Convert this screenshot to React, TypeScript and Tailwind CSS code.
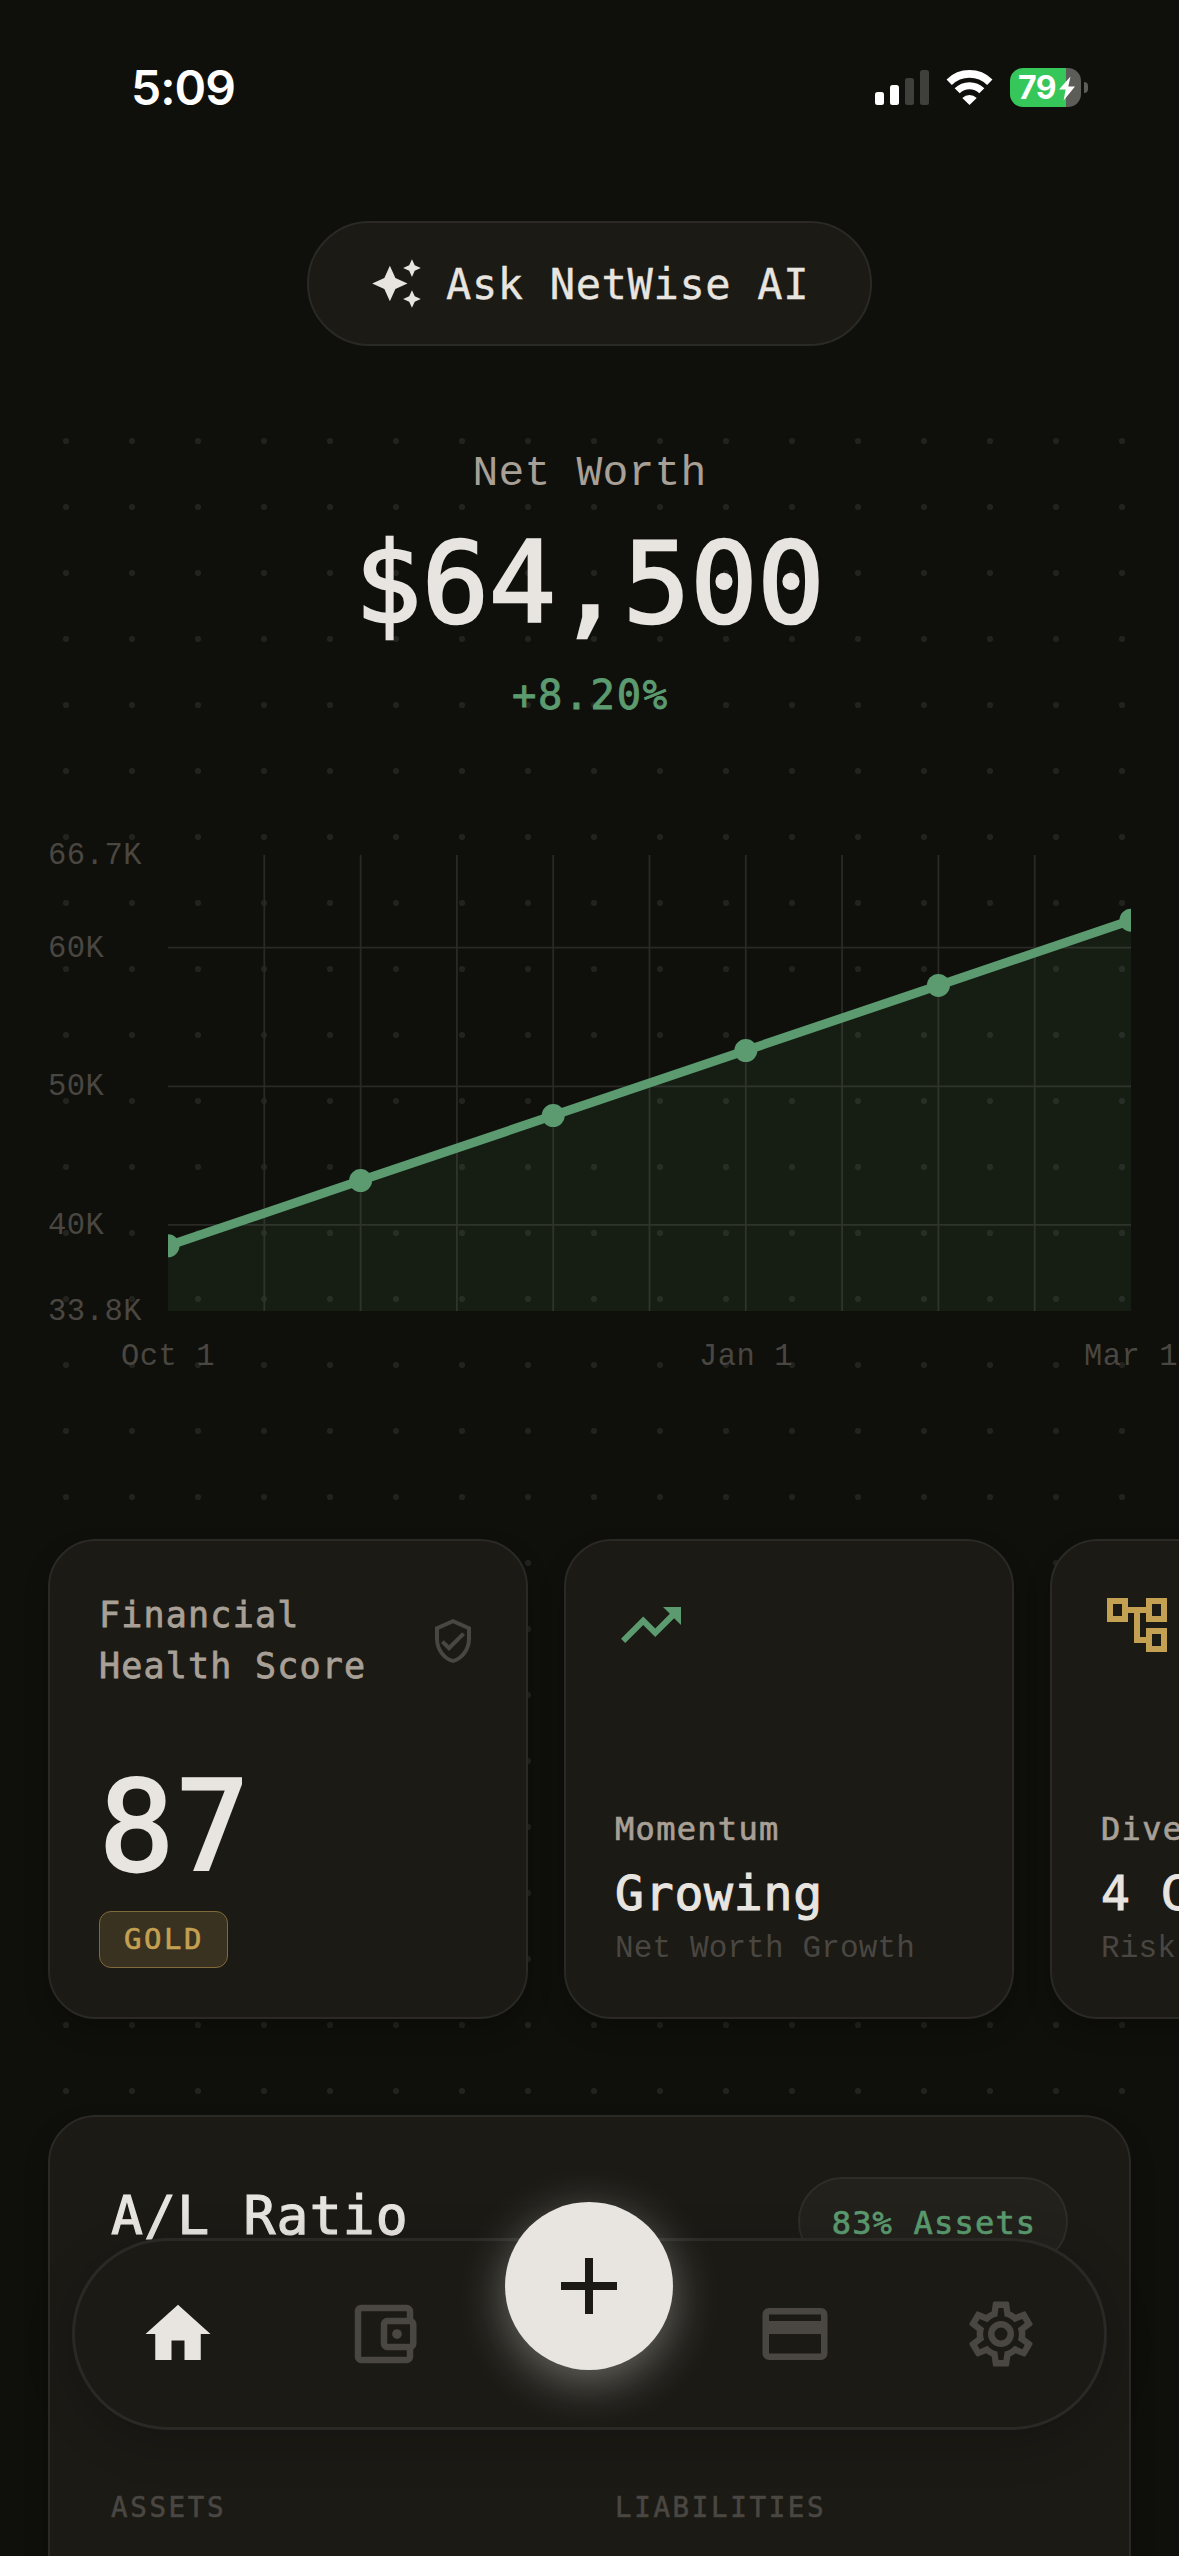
import type { ReactNode } from "react";

const MEDIUM =
  "font-['DejaVu_Sans_Mono','Liberation_Mono',monospace] [-webkit-text-stroke:0.022em_currentColor]";
const LIGHT = "font-['Liberation_Mono','DejaVu_Sans_Mono',monospace]";

const ICONS = {
  sparkle:
    "M19 9l1.25-2.75L23 5l-2.75-1.25L19 1l-1.25 2.75L15 5l2.75 1.25L19 9zm-7.5.5L9 4 6.5 9.5 1 12l5.5 2.5L9 20l2.5-5.5L17 12l-5.5-2.5zM19 15l-1.25 2.75L15 19l2.75 1.25L19 23l1.25-2.75L23 19l-2.75-1.25L19 15z",
  shield:
    "M21,11C21,16.55 17.16,21.74 12,23C6.84,21.74 3,16.55 3,11V5L12,1L21,5V11M12,21C15.75,20 19,15.54 19,11.22V6.3L12,3.18L5,6.3V11.22C5,15.54 8.25,20 12,21M16.59,7.58L10,14.17L7.41,11.59L6,13L10,17L18,9L16.59,7.58Z",
  trending:
    "M16,6L18.29,8.29L13.41,13.17L9.41,9.17L2,16.59L3.41,18L9.41,12L13.41,16L19.71,9.71L22,12V6H16Z",
  tree: "M22 11V3h-7v3H9V3H2v8h7V8h2v10h4v3h7v-8h-7v3h-2V8h2v3h7zM7 9H4V5h3v4zm10 6h3v4h-3v-4zm0-10h3v4h-3V5z",
  home: "M10,20V14H14V20H19V12H22L12,3L2,12H5V20H10Z",
  wallet:
    "M5,3C3.89,3 3,3.9 3,5V19A2,2 0 0,0 5,21H19A2,2 0 0,0 21,19V16.72C21.59,16.37 22,15.74 22,15V9C22,8.26 21.59,7.63 21,7.28V5A2,2 0 0,0 19,3H5M5,5H19V7H13A2,2 0 0,0 11,9V15A2,2 0 0,0 13,17H19V19H5V5M13,9H20V15H13V9M16,10.5A1.5,1.5 0 0,0 14.5,12A1.5,1.5 0 0,0 16,13.5A1.5,1.5 0 0,0 17.5,12A1.5,1.5 0 0,0 16,10.5Z",
  card: "M20,4H4C2.89,4 2,4.89 2,6V18A2,2 0 0,0 4,20H20A2,2 0 0,0 22,18V6C22,4.89 21.1,4 20,4M20,18H4V12H20V18M20,8H4V6H20V8Z",
  cog: "M12,8A4,4 0 0,1 16,12A4,4 0 0,1 12,16A4,4 0 0,1 8,12A4,4 0 0,1 12,8M12,10A2,2 0 0,0 10,12A2,2 0 0,0 12,14A2,2 0 0,0 14,12A2,2 0 0,0 12,10M10,22C9.75,22 9.54,21.82 9.5,21.58L9.13,18.93C8.5,18.68 7.96,18.34 7.44,17.94L4.95,18.95C4.73,19.03 4.46,18.95 4.34,18.73L2.34,15.27C2.21,15.05 2.27,14.78 2.46,14.63L4.57,12.97L4.5,12L4.57,11L2.46,9.37C2.27,9.22 2.21,8.95 2.34,8.73L4.34,5.27C4.46,5.05 4.73,4.96 4.95,5.05L7.44,6.05C7.96,5.66 8.5,5.32 9.13,5.07L9.5,2.42C9.54,2.18 9.75,2 10,2H14C14.25,2 14.46,2.18 14.5,2.42L14.87,5.07C15.5,5.32 16.04,5.66 16.56,6.05L19.05,5.05C19.27,4.96 19.54,5.05 19.66,5.27L21.66,8.73C21.79,8.95 21.73,9.22 21.54,9.37L19.43,11L19.5,12L19.43,13L21.54,14.63C21.73,14.78 21.79,15.05 21.66,15.27L19.66,18.73C19.54,18.95 19.27,19.04 19.05,18.95L16.56,17.95C16.04,18.34 15.5,18.68 14.87,18.93L14.5,21.58C14.46,21.82 14.25,22 14,22H10M11.25,4L10.88,6.61C9.68,6.86 8.62,7.5 7.85,8.39L5.44,7.35L4.69,8.65L6.8,10.2C6.4,11.37 6.4,12.64 6.8,13.8L4.68,15.36L5.43,16.66L7.86,15.62C8.63,16.5 9.68,17.14 10.87,17.38L11.24,20H12.76L13.13,17.39C14.32,17.14 15.37,16.5 16.14,15.62L18.57,16.66L19.32,15.36L17.2,13.81C17.6,12.64 17.6,11.37 17.2,10.2L19.31,8.65L18.56,7.35L16.15,8.39C15.38,7.5 14.32,6.86 13.12,6.62L12.75,4H11.25Z",
  plus: "M19,13H13V19H11V13H5V11H11V5H13V11H19V13Z",
};

function Icon({ name, className }: { name: keyof typeof ICONS; className: string }) {
  return (
    <svg viewBox="0 0 24 24" fill="currentColor" className={`block shrink-0 ${className}`}>
      <path d={ICONS[name]} />
    </svg>
  );
}

function StatusBar() {
  return (
    <div className="flex h-[221px] items-start justify-between pr-[91px] pl-[131px] text-white">
      <span className="mt-[58px] font-['Inter',sans-serif] text-[48px] leading-[60px] font-semibold tracking-[-1px]">
        5:09
      </span>
      <div className="mt-[68px] flex h-[39px] items-center">
        <svg className="block" width="54" height="35" viewBox="0 0 54 35" fill="white">
          <rect x="0" y="22" width="9" height="13" rx="2.5" />
          <rect x="15" y="15" width="9" height="20" rx="2.5" />
          <rect x="30" y="8" width="9" height="27" rx="2.5" opacity="0.2" />
          <rect x="45" y="0" width="9" height="35" rx="2.5" opacity="0.2" />
        </svg>
        <svg className="ml-[17px] block" width="47" height="35" viewBox="0 0 47 35" fill="none">
          <path d="M3.2 12.2 A29 29 0 0 1 43.8 12.2" stroke="white" strokeWidth="7.6" />
          <path d="M11.2 20.8 A17.5 17.5 0 0 1 35.8 20.8" stroke="white" strokeWidth="7.2" />
          <path d="M16.3 28 A10.4 10.4 0 0 1 30.7 28 L23.5 35 Z" fill="white" />
        </svg>
        <div className="relative ml-[17px] flex h-[39px] w-[71px] items-center overflow-hidden rounded-[13px] bg-[linear-gradient(90deg,#35c759_56px,#5c5c59_56px)]">
          <span className="ml-[8px] font-['Inter',sans-serif] text-[32px] leading-[39px] font-bold tracking-[-0.5px]">
            79
          </span>
          <svg className="absolute top-[8px] left-[48px]" width="18" height="25" viewBox="0 0 18 25">
            <path d="M12.5 0.5 L1 13.5 H7.6 L5.6 24.5 L17 10.5 H10.3 Z" fill="white" />
          </svg>
        </div>
        <div className="ml-[3px] h-[11px] w-[4px] rounded-r-full bg-[#5c5c59]" />
      </div>
    </div>
  );
}

const PLOT = { left: 168, right: 1131, top: 15, bottom: 471 };
const POINTS = [405.8, 340.6, 275.6, 210.6, 145.4, 80.2].map((y, i) => ({ x: 168 + i * 192.6, y }));
const Y_LABELS = [
  { text: "66.7K", y: 24 },
  { text: "60K", y: 117 },
  { text: "50K", y: 255 },
  { text: "40K", y: 394 },
  { text: "33.8K", y: 480 },
];
const X_LABELS = [
  { text: "Oct 1", x: 121 },
  { text: "Jan 1", x: 699 },
  { text: "Mar 1", x: 1084 },
];

function Chart() {
  const line = POINTS.map((p) => `${p.x},${p.y}`).join(" ");
  return (
    <svg className="mt-[115px] block" width="1179" height="540" viewBox="0 0 1179 540">
      <defs>
        <clipPath id="plot">
          <rect x={PLOT.left} y={PLOT.top} width={963} height={456} />
        </clipPath>
      </defs>
      <g stroke="#2a2925" strokeWidth="1.8">
        {[1, 2, 3, 4, 5, 6, 7, 8, 9].map((i) => (
          <line key={i} x1={PLOT.left + i * 96.3} x2={PLOT.left + i * 96.3} y1={PLOT.top} y2={PLOT.bottom} />
        ))}
        {[107.7, 246.3, 384.8].map((y) => (
          <line key={y} x1={PLOT.left} x2={PLOT.right} y1={y} y2={y} />
        ))}
      </g>
      <g clipPath="url(#plot)">
        <polygon
          points={`${PLOT.left},${PLOT.bottom} ${line} ${PLOT.right},${PLOT.bottom}`}
          fill="#5b9b6f"
          fillOpacity="0.1"
        />
        <polyline points={line} fill="none" stroke="#5b9b6f" strokeWidth="9" />
        {POINTS.map((p) => (
          <circle key={p.x} cx={p.x} cy={p.y} r="11.5" fill="#5b9b6f" />
        ))}
      </g>
      <g className={`${LIGHT} text-[30.5px] tracking-[0.5px]`} fill="#4a4641">
        {Y_LABELS.map((l) => (
          <text key={l.text} x="48" y={l.y}>
            {l.text}
          </text>
        ))}
        {X_LABELS.map((l) => (
          <text key={l.text} x={l.x} y="525">
            {l.text}
          </text>
        ))}
      </g>
    </svg>
  );
}

const CARD =
  "shrink-0 rounded-[48px] border-2 border-[#2a2925] bg-[#1b1a15] shadow-[0_12px_24px_rgba(0,0,0,0.22)]";

function MetricCard({
  icon,
  label,
  value,
  note,
}: {
  icon: ReactNode;
  label: string;
  value: string;
  note: string;
}) {
  return (
    <div className={`flex h-[480px] w-[450px] flex-col px-[49px] py-[48px] whitespace-nowrap ${CARD}`}>
      {icon}
      <div className={`mt-auto text-[32px] leading-[40px] tracking-[1.3px] text-[#a8a096] ${MEDIUM}`}>{label}</div>
      <div className={`mt-[14px] text-[48px] leading-[60px] tracking-[0.8px] text-[#e8e5e0] ${MEDIUM}`}>{value}</div>
      <div className={`mt-[6px] text-[31px] leading-[40px] tracking-[0.15px] text-[#4a4641] ${LIGHT}`}>{note}</div>
    </div>
  );
}

function NavBar() {
  return (
    <nav className="absolute right-[72px] bottom-[126px] left-[72px] grid h-[192px] grid-cols-5 place-items-center rounded-full border-3 border-[#2a2925] bg-[#1b1a15] text-[#4a4641] shadow-[0_12px_48px_rgba(0,0,0,0.2)]">
      <Icon name="home" className="size-[78px] text-[#e8e5e0]" />
      <Icon name="wallet" className="size-[78px]" />
      <button className="flex size-[168px] -translate-y-12 items-center justify-center rounded-full bg-[#e8e5e0] text-[#1b1a15] shadow-[0_12px_48px_rgba(232,229,224,0.4)]">
        <Icon name="plus" className="size-[96px]" />
      </button>
      <Icon name="card" className="size-[78px]" />
      <Icon name="cog" className="size-[78px]" />
    </nav>
  );
}

export default function App() {
  return (
    <div className="relative h-[2556px] w-[1179px] overflow-hidden bg-[#0f100b]">
      <StatusBar />
      <button
        className={`mx-auto flex h-[125px] w-[565px] items-center rounded-full border-2 border-[#2a2925] bg-[#1b1a15] pl-[61px] text-[#e8e5e0] ${MEDIUM}`}
      >
        <Icon name="sparkle" className="size-[53px]" />
        <span className="ml-[23px] pt-[3px] text-[42px] leading-[60px] tracking-[0.65px] whitespace-nowrap">
          Ask NetWise AI
        </span>
      </button>

      <main className="relative mt-[62px] h-[2148px]">
        <div className="absolute top-0 left-[33px] h-[1716px] w-[1122px] bg-[radial-gradient(circle_at_center,#22221e_2.7px,transparent_3.5px)] bg-[length:66px_66px]" />
        <div className="relative flex flex-col">
          <section className="flex flex-col items-center pt-[36px]">
            <div className={`text-[43px] leading-[60px] tracking-[0.2px] text-[#a8a096] ${LIGHT}`}>Net Worth</div>
            <div className={`mt-[19px] text-[112px] leading-[120px] tracking-[-0.3px] text-[#e8e5e0] ${MEDIUM}`}>
              $64,500
            </div>
            <div className={`mt-[22px] pl-[2px] text-[40.5px] leading-[60px] tracking-[1.8px] text-[#5b9b6f] ${MEDIUM}`}>
              +8.20%
            </div>
          </section>

          <Chart />

          <section className="mt-[159px] flex gap-[36px] pl-[48px]">
            <div className={`flex size-[480px] flex-col items-start justify-between p-[49px] ${CARD}`}>
              <div className="flex w-full items-center justify-between">
                <div className={`text-[35px] leading-[51px] tracking-[1.2px] whitespace-pre-line text-[#a8a096] ${MEDIUM}`}>
                  {"Financial\nHealth Score"}
                </div>
                <Icon name="shield" className="size-[48px] text-[#4a4641]" />
              </div>
              <div className="flex flex-col items-start">
                <div className={`text-[125px] leading-[130px] tracking-[0.6px] text-[#e8e5e0] ${MEDIUM}`}>87</div>
                <div
                  className={`mt-[19px] flex h-[57px] w-[129px] items-center justify-center rounded-[12px] border border-[#80693a] bg-[#3a3220] pl-[1px] text-[29px] tracking-[2.5px] text-[#c4a052] ${MEDIUM}`}
                >
                  GOLD
                </div>
              </div>
            </div>
            <MetricCard
              icon={<Icon name="trending" className="size-[72px] text-[#5b9b6f]" />}
              label="Momentum"
              value="Growing"
              note="Net Worth Growth"
            />
            <MetricCard
              icon={<Icon name="tree" className="size-[72px] text-[#c4a052]" />}
              label="Diversification"
              value="4 Classes"
              note="Risk Spread"
            />
          </section>

          <section className={`mx-[48px] mt-[96px] h-[600px] px-[61px] pt-[60px] ${CARD}`}>
            <div className="flex items-start justify-between">
              <h2 className={`mt-[6px] text-[53px] leading-[66px] tracking-[1.2px] text-[#e8e5e0] ${MEDIUM}`}>A/L Ratio</h2>
              <div
                className={`flex h-[89px] w-[270px] items-center justify-center rounded-full border-2 border-[#2e2d28] bg-[#22211c] pt-[2px] pl-[2px] text-[32px] tracking-[1.2px] text-[#5b9b6f] ${MEDIUM}`}
              >
                83% Assets
              </div>
            </div>
            <div
              className={`mt-[221px] grid grid-cols-2 gap-[51px] text-[27.5px] leading-[40px] tracking-[2.65px] text-[#4a4641] ${MEDIUM}`}
            >
              <div>ASSETS</div>
              <div>LIABILITIES</div>
            </div>
          </section>
        </div>
      </main>

      <NavBar />
    </div>
  );
}
